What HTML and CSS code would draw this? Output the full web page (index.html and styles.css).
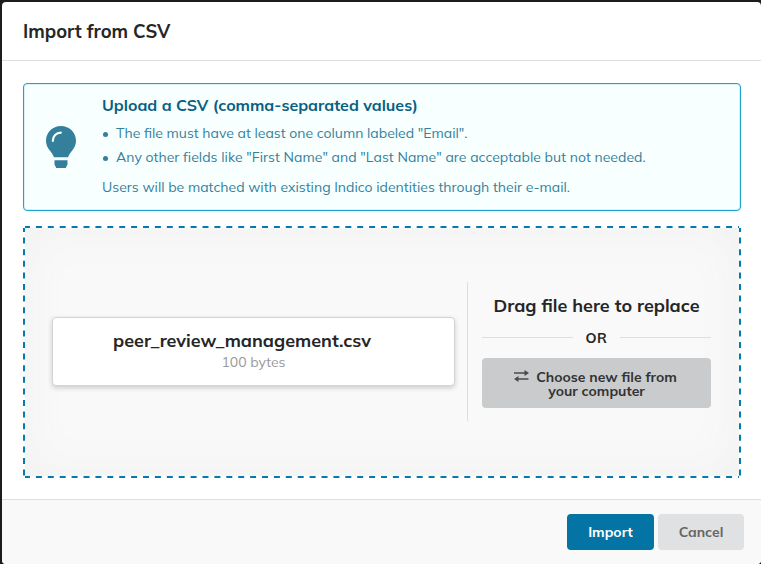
FILE: index.html
```
<!DOCTYPE html>
<html lang="en">
<head>
<meta charset="utf-8">
<title>Import from CSV</title>
<link rel="stylesheet" href="styles.css">
</head>
<body>
<div class="modal">
  <header class="header"><span>Import from CSV</span></header>
  <main class="content">
    <section class="message">
      <svg class="bulb" width="30" height="43" viewBox="0 0 30 43"><path fill="#347f9c" d="M15 0C6.500 0 0 6.500 0 14.700c0 4 1.500 7 3.600 9.600 1.900 2.200 3.600 4.800 4.300 7h14.200c.7-2.200 2.400-4.800 4.300-7 2.100-2.600 3.600-5.600 3.600-9.600C30 6.500 23.500 0 15 0zM8.500 34.200h13v4.300l-1.800 3.500h-9.400l-1.800-3.500z"/><path d="M6.800 15c0-5 3.500-8.300 8-8.300" fill="none" stroke="#f8ffff" stroke-width="2.200" stroke-linecap="round"/></svg>
      <div class="message-body">
        <h2>Upload a CSV (comma-separated values)</h2>
        <ul>
          <li>The file must have at least one column labeled "Email".</li>
          <li class="wide">Any other fields like "First Name" and "Last Name" are acceptable but not needed.</li>
        </ul>
        <p>Users will be matched with existing Indico identities through their e-mail.</p>
      </div>
    </section>
    <section class="dropzone">
      <svg class="dashes" width="718" height="252"><path d="M2 1H716M2 251H716" fill="none" stroke="#047bab" stroke-width="2" stroke-dasharray="6 5.900" stroke-dashoffset="1"/><path d="M1 2V250M717 2V250" fill="none" stroke="#047bab" stroke-width="2" stroke-dasharray="6 5.600" stroke-dashoffset="2"/></svg>
      <div class="file"><div class="filename">peer_review_management.csv</div><div class="size">100 bytes</div></div>
      <div class="picker">
        <h3>Drag file here to replace</h3>
        <div class="or">OR</div>
        <button class="choose"><span class="line"><svg width="15" height="12" viewBox="0 0 15 12"><path d="M0 3h11M4 9h10.500" stroke="#4b4b4b" stroke-width="1.600"/><path fill="#4b4b4b" d="M10.500 0 15 3l-4.500 3zM4.500 6 0 9l4.500 3z"/></svg><span>Choose new file from</span></span><span class="line">your computer</span></button>
      </div>
    </section>
  </main>
  <footer class="footer"><button class="primary">Import</button><button class="cancel">Cancel</button></footer>
</div>
</body>
</html>
```
FILE: styles.css
```
* { box-sizing: border-box; }
body { margin: 0; height: 564px; overflow: hidden; background: #1c1c1c; font-family: Muli, Mulish, Nunito, Lato, sans-serif; font-size: 14px; color: #262626; }
.modal { margin: 2px 0 0 2px; height: 562px; background: #fff; border-radius: 4px; display: flex; flex-direction: column; overflow: hidden; white-space: nowrap; }
.header { height: 59px; border-bottom: 1px solid #dededf; padding: 0 21px; font-size: 18.4px; font-weight: 660; line-height: 60px; }
.content { flex: 1; padding: 22px 20px 0 21px; }
.message { width: 718px; height: 128px; display: flex; background: #f8ffff; border: 1px solid #1ba4cf; border-radius: 4px; box-shadow: inset 0 0 0 1px #d7f1f5; color: #347f9c; padding-left: 21.5px; }
.bulb { margin-top: 42px; flex: none; }
.message-body { margin-left: 26.5px; padding-top: 10px; }
h2, h3, ul, p { margin: 0; padding: 0; }
h2 { font-size: 16px; line-height: 22px; color: #085f83; }
ul { list-style: none; margin-top: 5px; }
li { line-height: 24px; display: flex; align-items: center; }
.wide { letter-spacing: 0.02px; }
li::before { content: ""; width: 5px; height: 5px; border-radius: 50%; background: #347f9c; margin: 3px 8px 0 1px; }
p { line-height: 24px; margin-top: 6px; }
.dropzone { position: relative; height: 252px; width: 718px; margin-top: 15px; background: #f9f9f9; box-shadow: inset 0 0 50px #f0f0f0; display: flex; align-items: center; padding: 0 30px 1px 29px; }
.dashes { position: absolute; inset: 0; background: linear-gradient(#fff,#fff) top/100% 2px no-repeat, linear-gradient(#fff,#fff) bottom/100% 2px no-repeat, linear-gradient(#fff,#fff) left/2px 100% no-repeat, linear-gradient(#fff,#fff) right/2px 100% no-repeat; }
.file { width: 403px; height: 69px; background: #fff; border: 1px solid #d4d4d5; border-radius: 4px; box-shadow: 0 2px 5px #ccc; text-align: center; }
.filename { font-size: 18px; font-weight: 700; line-height: 24px; margin: 11px 23px 0 0; }
.size { color: #999; line-height: 19px; }
.picker { border-left: 1px solid #dedede; margin-left: 12px; padding-left: 14px; height: 139px; flex: 1; text-align: center; }
h3 { font-size: 18px; line-height: 24px; padding-top: 12px; }
.or { display: flex; align-items: center; gap: 13px; height: 20px; margin-top: 9px; padding-top: 1px; font-weight: 700; letter-spacing: 0.5px; }
.or::before, .or::after { content: ""; flex: 1; height: 1px; background: #dedede; }
button { border: 0; border-radius: 4px; font: 700 14px/14px Muli, Mulish, Nunito, Lato, sans-serif; }
.choose { width: 229px; height: 50px; margin-top: 11px; padding: 2px 0 0; background: #cacbcd; color: #333; }
.choose .line { display: flex; justify-content: center; height: 14px; }
.choose svg { margin: 0 7px 0 -2px; }
.footer { height: 65px; border-top: 1px solid #dededf; background: #f9f9f9; display: flex; justify-content: flex-end; gap: 4px; padding: 14px 17px 0 0; }
.footer button { height: 36px; padding: 0 0 1px; }
.primary { width: 87px; background: #0474a4; color: #fff; }
.cancel { width: 86px; background: #e0e1e2; color: #666; }
```
